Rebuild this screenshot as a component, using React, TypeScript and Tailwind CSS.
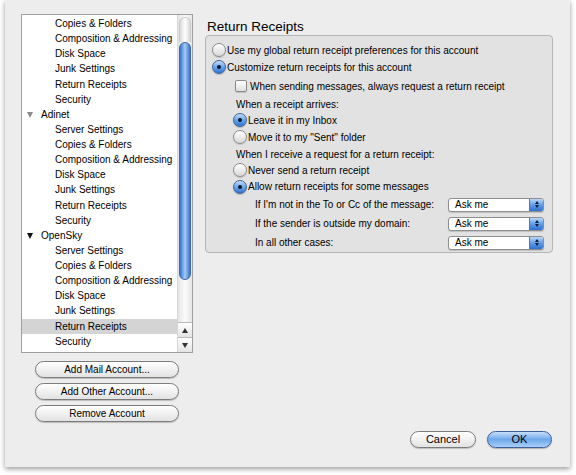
import React from 'react';

type Row = { label: string; level: 0 | 1; open?: 'gray' | 'black'; selected?: boolean };

const rows: Row[] = [
  { label: 'Copies & Folders', level: 1 },
  { label: 'Composition & Addressing', level: 1 },
  { label: 'Disk Space', level: 1 },
  { label: 'Junk Settings', level: 1 },
  { label: 'Return Receipts', level: 1 },
  { label: 'Security', level: 1 },
  { label: 'Adinet', level: 0, open: 'gray' },
  { label: 'Server Settings', level: 1 },
  { label: 'Copies & Folders', level: 1 },
  { label: 'Composition & Addressing', level: 1 },
  { label: 'Disk Space', level: 1 },
  { label: 'Junk Settings', level: 1 },
  { label: 'Return Receipts', level: 1 },
  { label: 'Security', level: 1 },
  { label: 'OpenSky', level: 0, open: 'black' },
  { label: 'Server Settings', level: 1 },
  { label: 'Copies & Folders', level: 1 },
  { label: 'Composition & Addressing', level: 1 },
  { label: 'Disk Space', level: 1 },
  { label: 'Junk Settings', level: 1 },
  { label: 'Return Receipts', level: 1, selected: true },
  { label: 'Security', level: 1 },
  { label: 'Local Folders', level: 1 },
];

const Radio: React.FC<{ on?: boolean }> = ({ on }) =>
  on ? (
    <span className="w-[14px] h-[14px] rounded-full border border-[#3f6298] bg-gradient-to-b from-[#c4ddf8] via-[#6aa5ea] to-[#2f74d6] flex items-center justify-center shrink-0 shadow-[0_1px_1px_rgba(0,0,0,0.2)]">
      <span className="w-[4px] h-[4px] rounded-full bg-[#0d1a2e]" />
    </span>
  ) : (
    <span className="w-[14px] h-[14px] rounded-full border border-[#8a8a8a] bg-gradient-to-b from-[#ffffff] to-[#d8d8d8] shrink-0 shadow-[0_1px_1px_rgba(0,0,0,0.15)]" />
  );

const Checkbox: React.FC = () => (
  <span className="w-[12px] h-[12px] rounded-[2px] border border-[#8a8a8a] bg-gradient-to-b from-[#ffffff] to-[#dedede] shrink-0 shadow-[0_1px_1px_rgba(0,0,0,0.15)]" />
);

const PopUp: React.FC = () => (
  <div className="w-[96px] h-[14px] rounded-[3px] border border-[#8e8e8e] bg-white flex items-center overflow-hidden shadow-[0_1px_1px_rgba(0,0,0,0.15)]">
    <span className="flex-1 pl-[6px] leading-none">Ask me</span>
    <span className="w-[14px] h-full bg-gradient-to-b from-[#bcd7f7] via-[#5e9ce8] to-[#2f6fd0] border-l border-[#5577aa] flex flex-col items-center justify-center gap-[1px]">
      <span className="w-0 h-0 border-l-[2.5px] border-r-[2.5px] border-b-[3px] border-l-transparent border-r-transparent border-b-[#10203a]" />
      <span className="w-0 h-0 border-l-[2.5px] border-r-[2.5px] border-t-[3px] border-l-transparent border-r-transparent border-t-[#10203a]" />
    </span>
  </div>
);

const Pill: React.FC<{ children: React.ReactNode; w: string; blue?: boolean }> = ({ children, w, blue }) => (
  <button
    className={
      blue
        ? `${w} h-[17px] rounded-full border border-[#3d5f9c] bg-gradient-to-b from-[#c7def9] via-[#6ea7ea] to-[#a9d0f7] text-[11px] leading-none text-black shadow-[0_1px_1px_rgba(0,0,0,0.25)]`
        : `${w} h-[17px] rounded-full border border-[#7b7b7b] bg-gradient-to-b from-[#ffffff] via-[#f1f1f1] to-[#e2e2e2] text-[10px] leading-none text-black shadow-[0_1px_1px_rgba(0,0,0,0.2)]`
    }
  >
    {children}
  </button>
);

const App: React.FC = () => {
  return (
    <div className="w-[576px] h-[475px] bg-white overflow-hidden text-[10px] text-black" style={{ fontFamily: '"Liberation Sans", Arial, sans-serif' }}>
      <div className="ml-[5px] w-[565px] h-[467px] bg-[#ededed] shadow-[0_2px_5px_rgba(0,0,0,0.4)] flex">
        {/* sidebar */}
        <div className="pl-[16px] pt-[14px] w-[188px] shrink-0 flex flex-col">
          <div className="w-[172px] h-[339px] bg-white border border-[#9f9f9f] flex overflow-hidden">
            <div className="flex-1 overflow-hidden pt-[1.5px]">
              {rows.map((r, i) => (
                <div
                  key={i}
                  className={`h-[15.14px] flex items-center ${r.selected ? 'bg-[#d4d4d4]' : ''} ${r.level === 0 ? 'pl-[5px]' : 'pl-[33px]'}`}
                >
                  {r.level === 0 && (
                    <span
                      className={`w-0 h-0 mr-[8px] border-l-[3.5px] border-r-[3.5px] border-t-[6px] border-l-transparent border-r-transparent ${r.open === 'gray' ? 'border-t-[#8c8c8c]' : 'border-t-[#111]'}`}
                    />
                  )}
                  <span className="leading-none whitespace-nowrap">{r.label}</span>
                </div>
              ))}
            </div>
            {/* scrollbar */}
            <div className="w-[15px] shrink-0 border-l border-[#d6d6d6] bg-gradient-to-r from-[#e6e6e6] via-[#fafafa] to-[#e6e6e6] flex flex-col">
              <div className="flex-1 pt-[2px] px-[1px] flex flex-col">
                <div className="h-[25px] rounded-t-full border border-[#c9c9c9] border-b-0 bg-gradient-to-r from-[#d9d9d9] via-[#ffffff] to-[#d9d9d9]" />
                <div className="h-[238px] rounded-full border border-[#3f68a8] bg-gradient-to-r from-[#3a72cc] via-[#a3cbf6] to-[#3a72cc]" />
              </div>
              <div className="h-[15px] border-t border-[#b9b9b9] bg-gradient-to-b from-[#ffffff] to-[#e4e4e4] flex items-center justify-center">
                <span className="w-0 h-0 border-l-[3px] border-r-[3px] border-b-[5px] border-l-transparent border-r-transparent border-b-[#333]" />
              </div>
              <div className="h-[15px] border-t border-[#b9b9b9] bg-gradient-to-b from-[#ffffff] to-[#e4e4e4] flex items-center justify-center">
                <span className="w-0 h-0 border-l-[3px] border-r-[3px] border-t-[5px] border-l-transparent border-r-transparent border-t-[#333]" />
              </div>
            </div>
          </div>
          <div className="w-[172px] mt-[8px] flex flex-col items-center gap-[5px]">
            <Pill w="w-[144px]">Add Mail Account...</Pill>
            <Pill w="w-[144px]">Add Other Account...</Pill>
            <Pill w="w-[144px]">Remove Account</Pill>
          </div>
        </div>

        {/* main */}
        <div className="flex-1 pl-[12px] pr-[17px] pt-[19px] pb-[19px] flex flex-col">
          <div className="h-[16px] pl-[2px] text-[13.5px] leading-none flex items-center">Return Receipts</div>
          <div className="h-[218px] rounded-[4px] border border-[#b5b5b5] bg-[#e2e2e2] pt-[6px] pl-[6px]">
            <div className="h-[16px] flex items-center gap-[1px]"><Radio /><span>Use my global return receipt preferences for this account</span></div>
            <div className="h-[18px] flex items-center gap-[1px]"><Radio on /><span>Customize return receipts for this account</span></div>
            <div className="h-[20px] flex items-center gap-[3px] pl-[23px]"><Checkbox /><span>When sending messages, always request a return receipt</span></div>
            <div className="h-[16px] flex items-center pl-[24px]">When a receipt arrives:</div>
            <div className="h-[16px] flex items-center gap-[1px] pl-[21px]"><Radio on /><span>Leave it in my Inbox</span></div>
            <div className="h-[18px] flex items-center gap-[1px] pl-[21px]"><Radio /><span>Move it to my "Sent" folder</span></div>
            <div className="h-[16px] flex items-center pl-[24px]">When I receive a request for a return receipt:</div>
            <div className="h-[16px] flex items-center gap-[1px] pl-[21px]"><Radio /><span>Never send a return receipt</span></div>
            <div className="h-[17px] flex items-center gap-[1px] pl-[21px]"><Radio on /><span>Allow return receipts for some messages</span></div>
            {[
              "If I'm not in the To or Cc of the message:",
              'If the sender is outside my domain:',
              'In all other cases:',
            ].map((t) => (
              <div key={t} className="h-[19px] flex items-center pl-[43px]">
                <span className="w-[193px] shrink-0">{t}</span>
                <PopUp />
              </div>
            ))}
          </div>
          <div className="flex-1" />
          <div className="flex justify-end gap-[11px] pr-[1px]">
            <Pill w="w-[66px]">
              <span className="text-[11px]">Cancel</span>
            </Pill>
            <Pill w="w-[65px]" blue>OK</Pill>
          </div>
        </div>
      </div>
    </div>
  );
};

export default App;
